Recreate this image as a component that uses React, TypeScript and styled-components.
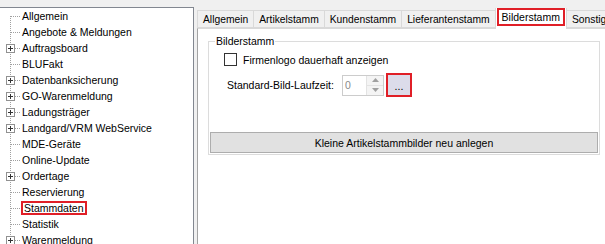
import styled, { createGlobalStyle } from "styled-components";

const GlobalStyle = createGlobalStyle`
  body {
    margin: 0;
    background: #f0f0f0;
    font-family: "Liberation Sans", Arial, sans-serif;
    font-size: 10.5px;
    color: #000;
    overflow: hidden;
  }
`;

const RED = "#e01f27";

const treeItems = [
  { label: "Allgemein" },
  { label: "Angebote & Meldungen" },
  { label: "Auftragsboard", expandable: true },
  { label: "BLUFakt" },
  { label: "Datenbanksicherung", expandable: true },
  { label: "GO-Warenmeldung", expandable: true },
  { label: "Ladungsträger", expandable: true },
  { label: "Landgard/VRM WebService", expandable: true },
  { label: "MDE-Geräte" },
  { label: "Online-Update" },
  { label: "Ordertage", expandable: true },
  { label: "Reservierung" },
  { label: "Stammdaten", marked: true },
  { label: "Statistik" },
  { label: "Warenmeldung", expandable: true },
];

const tabs = ["Allgemein", "Artikelstamm", "Kundenstamm", "Lieferantenstamm", "Bilderstamm", "Sonstiges"];

function Connector({ expandable, first }: { expandable?: boolean; first?: boolean }) {
  return (
    <svg width="21" height="16" viewBox="0 0 21 16">
      <line x1="10.5" y1={first ? 8 : 0} x2="10.5" y2="16" stroke="#a0a0a0" strokeDasharray="1 1" />
      <line x1="11" y1="8.5" x2="20" y2="8.5" stroke="#a0a0a0" strokeDasharray="1 1" />
      {expandable && (
        <>
          <rect x="6.5" y="4.5" width="8" height="8" fill="#fff" stroke="#919191" />
          <line x1="8" y1="8.5" x2="13" y2="8.5" stroke="#333" />
          <line x1="10.5" y1="6" x2="10.5" y2="11" stroke="#333" />
        </>
      )}
    </svg>
  );
}

function App() {
  return (
    <>
      <GlobalStyle />
      <Window>
        <Tree>
          {treeItems.map((item, i) => (
            <TreeRow key={item.label}>
              <Connector expandable={item.expandable} first={i === 0} />
              <TreeLabel $marked={item.marked}>{item.label}</TreeLabel>
            </TreeRow>
          ))}
        </Tree>
        <TabControl>
          <TabStrip>
            {tabs.map((t) => (
              <Tab key={t} $selected={t === "Bilderstamm"}>
                {t === "Bilderstamm" ? <Marked>{t}</Marked> : t}
              </Tab>
            ))}
          </TabStrip>
          <TabPage>
            <Group>
              <Legend>Bilderstamm</Legend>
              <CheckRow>
                <CheckBox />
                <span>Firmenlogo dauerhaft anzeigen</span>
              </CheckRow>
              <FieldRow>
                <FieldLabel>Standard-Bild-Laufzeit:</FieldLabel>
                <Spin>
                  <SpinValue>0</SpinValue>
                  <SpinButtons>
                    <SpinArrow>
                      <svg width="7" height="4" viewBox="0 0 7 4">
                        <path d="M0 4 L3.5 0 L7 4 Z" fill="#a0a0a0" />
                      </svg>
                    </SpinArrow>
                    <SpinArrow>
                      <svg width="7" height="4" viewBox="0 0 7 4">
                        <path d="M0 0 L3.5 4 L7 0 Z" fill="#a0a0a0" />
                      </svg>
                    </SpinArrow>
                  </SpinButtons>
                </Spin>
                <DotsFrame>
                  <DotsButton>...</DotsButton>
                </DotsFrame>
              </FieldRow>
              <WideButton>Kleine Artikelstammbilder neu anlegen</WideButton>
            </Group>
          </TabPage>
        </TabControl>
      </Window>
    </>
  );
}

const Window = styled.div`
  display: flex;
  height: 244px;
  width: 605px;
  overflow: hidden;
`;

const Tree = styled.div`
  margin-top: 7px;
  width: 193px;
  flex-shrink: 0;
  background: #fff;
  border-top: 1px solid #828790;
  border-right: 1px solid #828790;
`;

const TreeRow = styled.div`
  display: flex;
  align-items: center;
  height: 16px;
  white-space: nowrap;
`;

const TreeLabel = styled.span<{ $marked?: boolean }>`
  line-height: ${(p) => (p.$marked ? "10px" : "13px")};
  border: ${(p) => (p.$marked ? `2px solid ${RED}` : "none")};
  margin-left: ${(p) => (p.$marked ? "0" : "1px")};
  padding: ${(p) => (p.$marked ? "0 1px" : "0")};
`;

const TabControl = styled.div`
  margin-left: 3px;
  display: flex;
  flex-direction: column;
  width: 420px;
  flex-shrink: 0;
`;

const TabStrip = styled.div`
  display: flex;
  align-items: flex-end;
  height: 20px;
  margin-top: 8px;
  padding-left: 1px;
  position: relative;
  z-index: 1;
  font-size: 10.3px;
`;

const Tab = styled.div<{ $selected?: boolean }>`
  display: flex;
  justify-content: center;
  white-space: nowrap;
  height: ${(p) => (p.$selected ? "21px" : "18px")};
  margin-bottom: ${(p) => (p.$selected ? "-1px" : "0")};
  padding: ${(p) => (p.$selected ? "0 1px" : "0 5px")};
  background: ${(p) => (p.$selected ? "#fff" : "#f0f0f0")};
  border: 1px solid #d9d9d9;
  border-top: ${(p) => (p.$selected ? "none" : "1px solid #d9d9d9")};
  border-bottom: ${(p) => (p.$selected ? "none" : "1px solid #d9d9d9")};
  margin-left: -1px;
  box-sizing: border-box;
  align-items: ${(p) => (p.$selected ? "flex-start" : "center")};
`;

const Marked = styled.span`
  border: 2px solid ${RED};
  padding: 0 3px;
  line-height: 14px;
  font-size: 10.5px;
`;

const TabPage = styled.div`
  flex: 1;
  background: #fff;
  border-top: 1px solid #d9d9d9;
  border-left: 1px solid #a3a3a3;
  padding: 6px 0 0 10px;
`;

const Group = styled.fieldset`
  margin: 0;
  width: 392px;
  box-sizing: border-box;
  border: 1px solid #dcdcdc;
  padding: 0 1px 1px 1px;
  display: flex;
  flex-direction: column;
`;

const Legend = styled.legend`
  margin-left: 5px;
  padding: 0 1px;
  line-height: 13px;
`;

const CheckRow = styled.label`
  display: flex;
  align-items: center;
  gap: 6px;
  margin: 5px 0 0 14px;
  height: 13px;
`;

const CheckBox = styled.span`
  width: 13px;
  height: 13px;
  box-sizing: border-box;
  border: 1px solid #333;
  background: #fff;
`;

const FieldRow = styled.div`
  display: flex;
  align-items: center;
  margin: 7px 0 0 17px;
  height: 24px;
`;

const FieldLabel = styled.span`
  width: 115px;
`;

const Spin = styled.div`
  display: flex;
  width: 42px;
  height: 21px;
  box-sizing: border-box;
  border: 1px solid #cccccc;
  background: #fff;
`;

const SpinValue = styled.span`
  flex: 1;
  color: #8a8a8a;
  padding: 3px 0 0 2px;
`;

const SpinButtons = styled.div`
  width: 16px;
  display: flex;
  flex-direction: column;
  border-left: 1px solid #e3e3e3;
  background: #f4f4f4;
`;

const SpinArrow = styled.div`
  flex: 1;
  display: flex;
  align-items: center;
  justify-content: center;
  & + & {
    border-top: 1px solid #e3e3e3;
  }
`;

const DotsFrame = styled.div`
  margin-left: 2px;
  width: 26px;
  height: 24px;
  box-sizing: border-box;
  border: 2px solid ${RED};
  display: flex;
`;

const DotsButton = styled.div`
  flex: 1;
  background: #dcdcea;
  display: flex;
  align-items: flex-end;
  justify-content: center;
  padding-bottom: 4px;
  line-height: 10px;
`;

const WideButton = styled.div`
  margin-top: 35px;
  height: 21px;
  box-sizing: border-box;
  background: #e1e1e1;
  border: 1px solid #adadad;
  display: flex;
  align-items: center;
  justify-content: center;
`;

export default App;
